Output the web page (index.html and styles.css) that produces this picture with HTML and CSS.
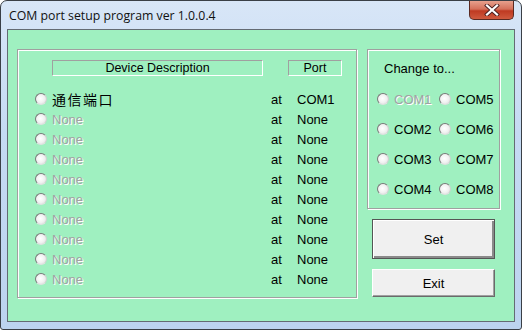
FILE: index.html
```html
<!DOCTYPE html>
<html lang="en">
<head>
    <meta charset="UTF-8">
    <title>COM port setup program ver 1.0.0.4</title>
    <link rel="stylesheet" href="styles.css">
</head>
<body>
    <div class="window">
        <div class="titlebar">
            <span class="title">COM port setup program ver 1.0.0.4</span>
            <div class="close">
                <svg width="16" height="12" viewBox="0 0 16 12">
                    <path d="M3 1.5 L13 10.5 M13 1.5 L3 10.5" stroke="#4a2020" stroke-width="4" stroke-linecap="square"/>
                    <path d="M3 1.5 L13 10.5 M13 1.5 L3 10.5" stroke="#fff" stroke-width="2.2" stroke-linecap="square"/>
                </svg>
            </div>
        </div>
        <div class="client">
            <div class="group devices">
                <div class="header">
                    <div class="hbox desc">Device Description</div>
                    <div class="hbox port">Port</div>
                </div>
                <div class="rows">
                    <div class="row"><span class="radio"></span><span class="label cjk">通信端口</span><span class="at">at</span><span class="com">COM1</span></div>
                    <div class="row"><span class="radio"></span><span class="label off">None</span><span class="at">at</span><span class="com">None</span></div>
                    <div class="row"><span class="radio"></span><span class="label off">None</span><span class="at">at</span><span class="com">None</span></div>
                    <div class="row"><span class="radio"></span><span class="label off">None</span><span class="at">at</span><span class="com">None</span></div>
                    <div class="row"><span class="radio"></span><span class="label off">None</span><span class="at">at</span><span class="com">None</span></div>
                    <div class="row"><span class="radio"></span><span class="label off">None</span><span class="at">at</span><span class="com">None</span></div>
                    <div class="row"><span class="radio"></span><span class="label off">None</span><span class="at">at</span><span class="com">None</span></div>
                    <div class="row"><span class="radio"></span><span class="label off">None</span><span class="at">at</span><span class="com">None</span></div>
                    <div class="row"><span class="radio"></span><span class="label off">None</span><span class="at">at</span><span class="com">None</span></div>
                    <div class="row"><span class="radio"></span><span class="label off">None</span><span class="at">at</span><span class="com">None</span></div>
                </div>
            </div>
            <div class="side">
                <div class="group change">
                    <div class="change-title">Change to...</div>
                    <div class="opts">
                        <div class="opt"><span class="radio"></span><span class="off">COM1</span></div>
                        <div class="opt"><span class="radio"></span><span>COM5</span></div>
                        <div class="opt"><span class="radio"></span><span>COM2</span></div>
                        <div class="opt"><span class="radio"></span><span>COM6</span></div>
                        <div class="opt"><span class="radio"></span><span>COM3</span></div>
                        <div class="opt"><span class="radio"></span><span>COM7</span></div>
                        <div class="opt"><span class="radio"></span><span>COM4</span></div>
                        <div class="opt"><span class="radio"></span><span>COM8</span></div>
                    </div>
                </div>
                <button class="btn btn-set">Set</button>
                <button class="btn btn-exit">Exit</button>
            </div>
        </div>
    </div>
</body>
</html>
```

FILE: styles.css
```css
html, body {
    margin: 0;
    padding: 0;
    background: #fff;
}
body {
    font-family: 'Liberation Sans', Arial, sans-serif;
    font-size: 13px;
    color: #000;
}
.window {
    width: 522px;
    height: 330px;
    box-sizing: border-box;
    border: 1px solid #3a3f46;
    border-radius: 7px 7px 3px 3px;
    background: linear-gradient(180deg, #d8e6f7 0%, #c5daf3 40%, #bcd3ef 100%);
    padding: 0 6px 7px 6px;
    display: flex;
    flex-direction: column;
    overflow: hidden;
}
.titlebar {
    height: 28px;
    display: flex;
    align-items: flex-start;
    justify-content: space-between;
}
.title {
    font-family: 'Open Sans', 'Noto Sans', sans-serif;
    font-size: 12.3px;
    margin: 6px 0 0 2px;
    color: #111;
}
.close {
    width: 45px;
    height: 19px;
    margin-right: 1px;
    border: 1px solid #5a2a22;
    border-top: none;
    border-radius: 0 0 5px 5px;
    background: linear-gradient(180deg, #e7a08d 0%, #d4705a 45%, #bf3a22 55%, #cf5a3e 100%);
    box-sizing: border-box;
    display: flex;
    align-items: center;
    justify-content: center;
}
.client {
    flex: 1;
    border: 1px solid #646b73;
    background: #9ff0c0;
    display: flex;
    padding: 19px 0 0 9px;
    gap: 10px;
}
.group {
    box-sizing: border-box;
    border: 1px solid #a0a0a0;
    box-shadow: inset 1px 1px 0 #fff, 1px 1px 0 #fff;
}
.devices {
    width: 340px;
    height: 249px;
    padding: 10px 0 0 17px;
}
.header {
    display: flex;
    gap: 25px;
    padding-left: 17px;
    margin-bottom: 13px;
}
.hbox {
    height: 16px;
    box-sizing: border-box;
    border: 1px solid #a0a0a0;
    border-right-color: #fff;
    border-bottom-color: #fff;
    text-align: center;
    line-height: 15px;
    font-size: 12.5px;
}
.desc {
    width: 211px;
}
.port {
    width: 54px;
}
.row {
    height: 20px;
    display: flex;
    align-items: center;
}
.radio {
    width: 12px;
    height: 12px;
    box-sizing: border-box;
    border-radius: 50%;
    border: 1px solid #7a7a7a;
    border-right-color: #d0d0d0;
    border-bottom-color: #e0e0e0;
    background: radial-gradient(circle at 45% 45%, #ffffff 0%, #f2f2f2 50%, #d4d4d4 100%);
    flex: none;
}
.row .radio {
    margin-right: 5px;
}
.label {
    width: 219px;
}
.cjk {
    font-family: 'Noto Sans CJK SC', sans-serif;
    font-size: 14px;
    letter-spacing: 1.5px;
}
.off {
    color: #a2a2a2;
    text-shadow: 1px 1px 0 #fff;
}
.at {
    width: 26px;
}
.side {
    width: 133px;
    display: flex;
    flex-direction: column;
}
.change {
    height: 160px;
    padding: 11px 0 0 0;
}
.change-title {
    padding-left: 16px;
    height: 16px;
    line-height: 16px;
    margin-bottom: 7px;
}
.opts {
    display: grid;
    grid-template-columns: 62px 60px;
    grid-auto-rows: 30px;
    padding-left: 9px;
}
.opt {
    display: flex;
    align-items: center;
    gap: 5px;
}
.btn {
    font-family: 'Liberation Sans', Arial, sans-serif;
    font-size: 13px;
    margin-left: 5px;
    width: 123px;
    background: #f0f0f0;
    border: 1px solid #fff;
    border-right-color: #6a6a6a;
    border-bottom-color: #6a6a6a;
    box-shadow: inset -1px -1px 0 #a0a0a0;
    padding: 0;
    color: #000;
}
.btn-set {
    height: 40px;
    margin-top: 10px;
    border: 1px solid #555;
    box-shadow: inset 1px 1px 0 #fff, inset -2px -2px 0 #8a8a8a;
}
.btn-exit {
    height: 28px;
    margin-top: 10px;
}
```
